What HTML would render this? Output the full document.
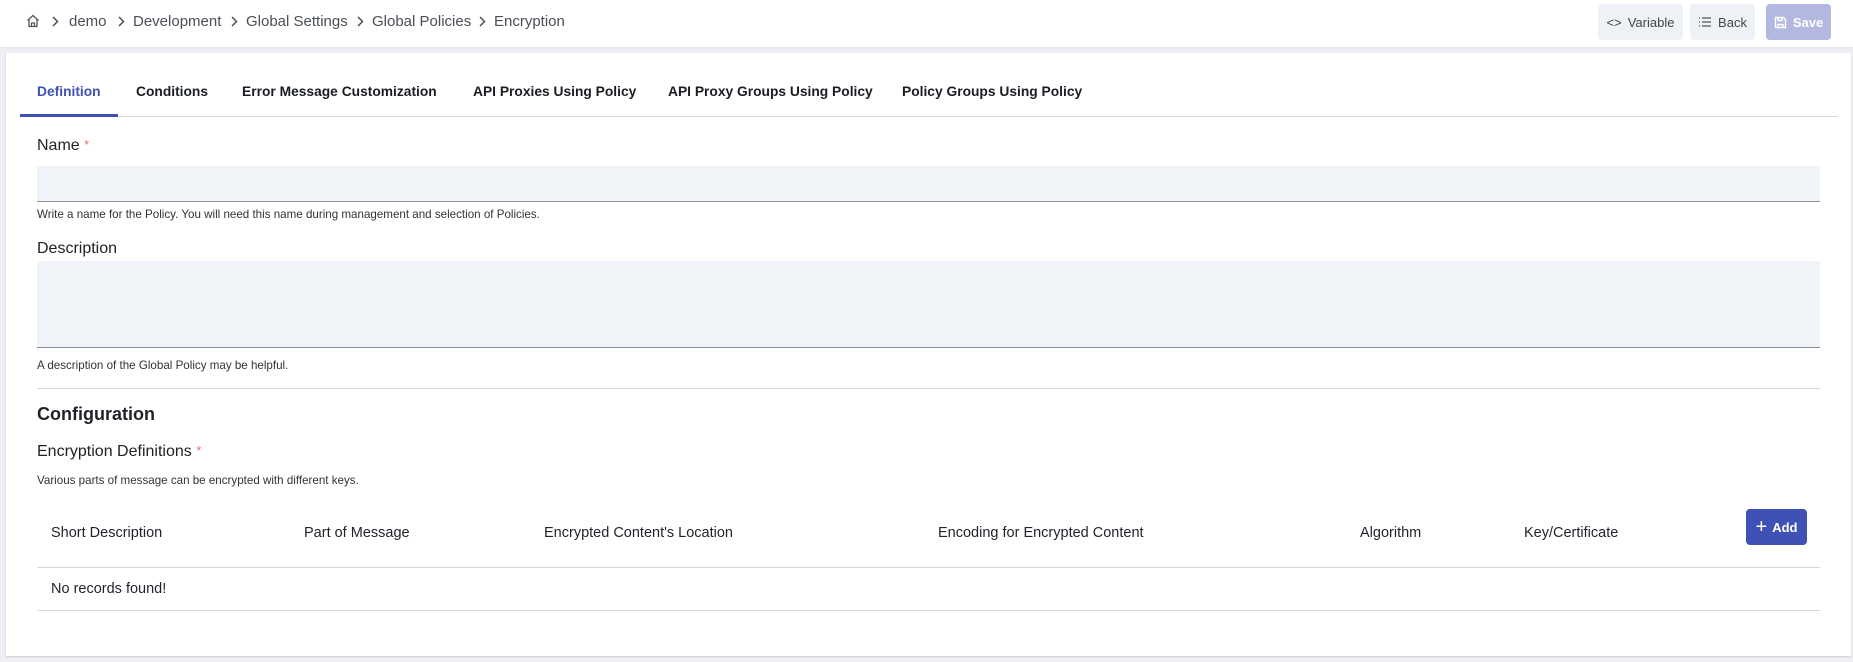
<!DOCTYPE html>
<html><head><meta charset="utf-8"><style>
*{margin:0;padding:0;box-sizing:border-box}
body{width:1853px;height:662px;background:#eef0f5;font-family:"Liberation Sans",sans-serif;position:relative;overflow:hidden;color:#1f2329}
.a{position:absolute;white-space:nowrap}
.hdr{position:absolute;left:0;top:0;width:1853px;height:47px;background:#fff;box-shadow:0 1px 3px rgba(0,0,0,.06)}
.bc{top:13px;font-size:15px;color:#4a4f57}
.chev{top:16px}
.btn{position:absolute;top:4px;height:36px;border-radius:4px;background:#eef2f7;font-size:13px;color:#444;display:flex;align-items:center;justify-content:center;gap:6px}
.card{position:absolute;left:6px;top:53px;width:1845px;height:603px;background:#fff;box-shadow:0 1px 2px rgba(0,0,0,.15)}
.tab{top:84px;font-size:13.8px;font-weight:bold;color:#1a1d22}
.lbl{font-size:16px;color:#222}
.help{font-size:11.6px;color:#333}
.field{position:absolute;left:37px;width:1783px;background:#f0f3f8;border-bottom:1px solid #8a9099}
.hr{position:absolute;left:37px;width:1783px;height:1px;background:#d5d8de}
.th{top:525px;font-size:14.5px;color:#1f2329}
.star{color:#e57373;font-size:13px;vertical-align:top}
</style></head><body>
<div class="hdr"></div>
<svg class="a" style="left:26px;top:14px" width="14" height="14" viewBox="0 0 14 14" fill="none" stroke="#555" stroke-width="1.3"><path d="M1.5 6.5L7 1.5l5.5 5M3 5.5V12.5h8V5.5M5.5 12.5V9h3v3.5"/></svg>
<svg class="a chev" style="left:51px" width="8" height="11" viewBox="0 0 8 11" fill="none" stroke="#4a4f57" stroke-width="1.5"><path d="M2 1l4.5 4.5L2 10"/></svg>
<div class="a bc" style="left:69px">demo</div>
<svg class="a chev" style="left:117px" width="8" height="11" viewBox="0 0 8 11" fill="none" stroke="#4a4f57" stroke-width="1.5"><path d="M2 1l4.5 4.5L2 10"/></svg>
<div class="a bc" style="left:133px">Development</div>
<svg class="a chev" style="left:230px" width="8" height="11" viewBox="0 0 8 11" fill="none" stroke="#4a4f57" stroke-width="1.5"><path d="M2 1l4.5 4.5L2 10"/></svg>
<div class="a bc" style="left:246px">Global Settings</div>
<svg class="a chev" style="left:356px" width="8" height="11" viewBox="0 0 8 11" fill="none" stroke="#4a4f57" stroke-width="1.5"><path d="M2 1l4.5 4.5L2 10"/></svg>
<div class="a bc" style="left:372px">Global Policies</div>
<svg class="a chev" style="left:478px" width="8" height="11" viewBox="0 0 8 11" fill="none" stroke="#4a4f57" stroke-width="1.5"><path d="M2 1l4.5 4.5L2 10"/></svg>
<div class="a bc" style="left:494px">Encryption</div>
<div class="btn" style="left:1598px;width:85px"><span style="font-size:13px">&lt;&gt;</span>Variable</div>
<div class="btn" style="left:1690px;width:65px"><svg width="14" height="12" viewBox="0 0 14 12" stroke="#555" stroke-width="1.3"><path d="M1 2h1M4 2h9M1 6h1M4 6h9M1 10h1M4 10h9"/></svg>Back</div>
<div class="btn" style="left:1766px;width:65px;background:#b3b8e0;color:#fff;font-weight:bold"><svg width="13" height="13" viewBox="0 0 13 13" fill="none" stroke="#fff" stroke-width="1.4"><path d="M1.5 1.5h8l2 2v8h-10z M4 1.5v3h4v-3 M4 11.5v-3h5v3"/></svg>Save</div>
<div class="card"></div>
<div class="a tab" style="left:37px;color:#3f51b5">Definition</div>
<div class="a tab" style="left:136px">Conditions</div>
<div class="a tab" style="left:242px">Error Message Customization</div>
<div class="a tab" style="left:473px">API Proxies Using Policy</div>
<div class="a tab" style="left:668px">API Proxy Groups Using Policy</div>
<div class="a tab" style="left:902px">Policy Groups Using Policy</div>
<div class="a" style="left:20px;top:116px;width:1818px;height:1px;background:#d5d8de"></div>
<div class="a" style="left:20px;top:114px;width:98px;height:3px;background:#3f51b5"></div>
<div class="a lbl" style="left:37px;top:137px">Name <span class="star">*</span></div>
<div class="field" style="top:166px;height:36px"></div>
<div class="a help" style="left:37px;top:208px">Write a name for the Policy. You will need this name during management and selection of Policies.</div>
<div class="a lbl" style="left:37px;top:240px">Description</div>
<div class="field" style="top:261px;height:87px"></div>
<div class="a help" style="left:37px;top:359px">A description of the Global Policy may be helpful.</div>
<div class="hr" style="top:388px"></div>
<div class="a" style="left:37px;top:404px;font-size:18px;font-weight:bold">Configuration</div>
<div class="a lbl" style="left:37px;top:443px">Encryption Definitions <span class="star">*</span></div>
<div class="a help" style="left:37px;top:474px">Various parts of message can be encrypted with different keys.</div>
<div class="a th" style="left:51px">Short Description</div>
<div class="a th" style="left:304px">Part of Message</div>
<div class="a th" style="left:544px">Encrypted Content's Location</div>
<div class="a th" style="left:938px">Encoding for Encrypted Content</div>
<div class="a th" style="left:1360px">Algorithm</div>
<div class="a th" style="left:1524px">Key/Certificate</div>
<div class="a" style="left:1746px;top:509px;width:61px;height:36px;background:#3f51b5;border-radius:4px;color:#fff;font-size:13px;font-weight:bold;display:flex;align-items:center;justify-content:center;gap:5px"><span style="font-size:20px;font-weight:normal;line-height:1">+</span>Add</div>
<div class="hr" style="top:567px;left:37px"></div>
<div class="a" style="left:51px;top:581px;font-size:14.5px">No records found!</div>
<div class="hr" style="top:610px"></div>
</body></html>
